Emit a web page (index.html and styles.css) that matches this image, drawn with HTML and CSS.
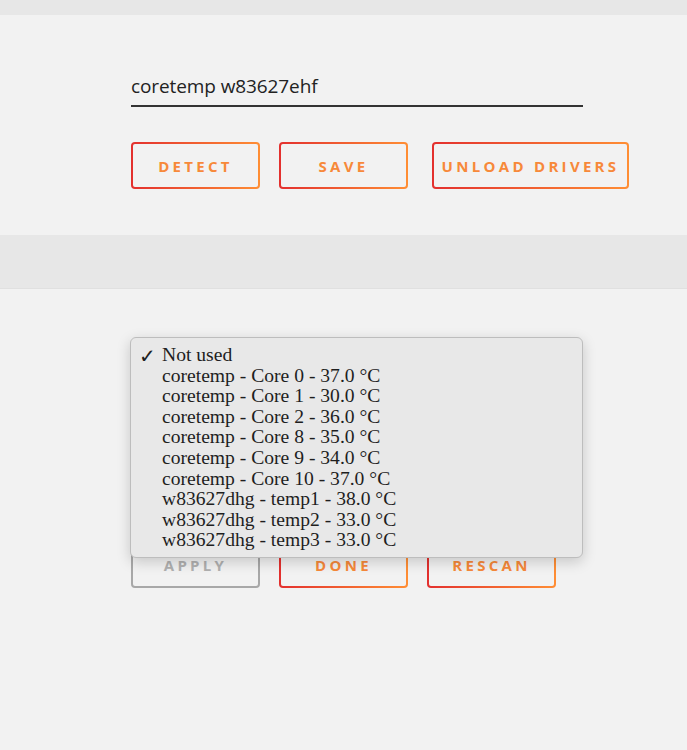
FILE: index.html
```html
<!DOCTYPE html>
<html lang="en">
<head>
    <meta charset="UTF-8">
    <title>Sensors</title>
    <link rel="stylesheet" href="styles.css">
</head>
<body>
    <div class="band band-top"></div>

    <section class="panel panel-drivers">
        <div class="field">
            <input type="text" class="text-input" value="coretemp w83627ehf">
        </div>
        <div class="actions">
            <button class="btn btn-wide">Detect</button>
            <button class="btn btn-wide">Save</button>
            <button class="btn btn-unload">Unload drivers</button>
        </div>
    </section>

    <div class="band band-mid"></div>

    <section class="panel panel-sensors">
        <div class="select-line first"></div>
        <div class="select-line second"></div>
        <div class="select-line third"></div>
        <div class="actions actions-bottom">
            <button class="btn btn-wide" disabled>Apply</button>
            <button class="btn btn-wide">Done</button>
            <button class="btn btn-wide">Rescan</button>
        </div>

        <!-- open dropdown for the first sensor select -->
        <ul class="popup">
            <li class="checked">Not used</li>
            <li>coretemp - Core 0 - 37.0 °C</li>
            <li>coretemp - Core 1 - 30.0 °C</li>
            <li>coretemp - Core 2 - 36.0 °C</li>
            <li>coretemp - Core 8 - 35.0 °C</li>
            <li>coretemp - Core 9 - 34.0 °C</li>
            <li>coretemp - Core 10 - 37.0 °C</li>
            <li>w83627dhg - temp1 - 38.0 °C</li>
            <li>w83627dhg - temp2 - 33.0 °C</li>
            <li>w83627dhg - temp3 - 33.0 °C</li>
        </ul>
    </section>
</body>
</html>
```

FILE: styles.css
```css
body {
    margin: 0;
    background-color: #f2f2f2;
    font-family: "Open Sans", "Noto Sans", sans-serif;
    color: #222;
}
.band {
    background-color: #e7e7e7;
}
.band-top {
    height: 15px;
}
.band-mid {
    height: 53px;
    border-bottom: 1px solid #e0e0e0;
}
.panel {
    padding-left: 131px;
}
.panel-drivers {
    height: 220px;
    padding-top: 54px;
    box-sizing: border-box;
}
.text-input {
    display: block;
    width: 452px;
    box-sizing: border-box;
    margin: 0;
    padding: 4px 0 6px 0;
    border: none;
    border-bottom: 2px solid #333;
    background: transparent;
    font-family: "Open Sans", sans-serif;
    font-size: 19px;
    letter-spacing: -0.1px;
    color: #222;
    outline: none;
}
.actions {
    display: flex;
    gap: 19px;
    margin-top: 35px;
}
.btn {
    flex-shrink: 0;
    height: 47px;
    padding: 0;
    border: 2px solid transparent;
    border-radius: 4px;
    background:
        linear-gradient(#f2f2f2, #f2f2f2) padding-box,
        linear-gradient(90deg, #e3302e, #ff8e34) border-box;
    color: #f7893a;
    font-family: "Open Sans", sans-serif;
    font-weight: 700;
    font-size: 15px;
    letter-spacing: 3.3px;
    text-transform: uppercase;
    cursor: pointer;
}
.btn-wide {
    width: 129px;
}
.btn-unload {
    width: 197px;
    margin-left: 5px;
}
.btn:disabled {
    background: #f2f2f2;
    border-color: #a8a8a8;
    color: #b0b0b0;
    cursor: default;
}
.panel-sensors {
    position: relative;
    padding-top: 94px;
    height: 460px;
    box-sizing: border-box;
}
.select-line {
    width: 452px;
    height: 1px;
    background-color: #8a8a8a;
}
.select-line.second {
    margin-top: 64px;
}
.select-line.third {
    margin-top: 58px;
}
.actions-bottom {
    margin-top: 33px;
}
.popup {
    position: absolute;
    left: 130px;
    top: 48px;
    width: 453px;
    height: 221px;
    box-sizing: border-box;
    margin: 0;
    padding: 7px 0 0 0;
    list-style: none;
    background-color: #e8e8e8;
    border: 1px solid #bdbdbd;
    border-radius: 6px;
    box-shadow: 0 4px 14px rgba(0, 0, 0, 0.18);
    font-family: "Liberation Serif", "Times New Roman", serif;
    font-size: 19.6px;
    line-height: 20.6px;
    color: #1e1e1e;
}
.popup li {
    padding-left: 31px;
    position: relative;
}
.popup li.checked::before {
    content: "\2713";
    position: absolute;
    left: 8px;
    top: 1px;
    font-family: "DejaVu Sans", sans-serif;
    font-weight: 700;
    font-size: 20px;
}
```
